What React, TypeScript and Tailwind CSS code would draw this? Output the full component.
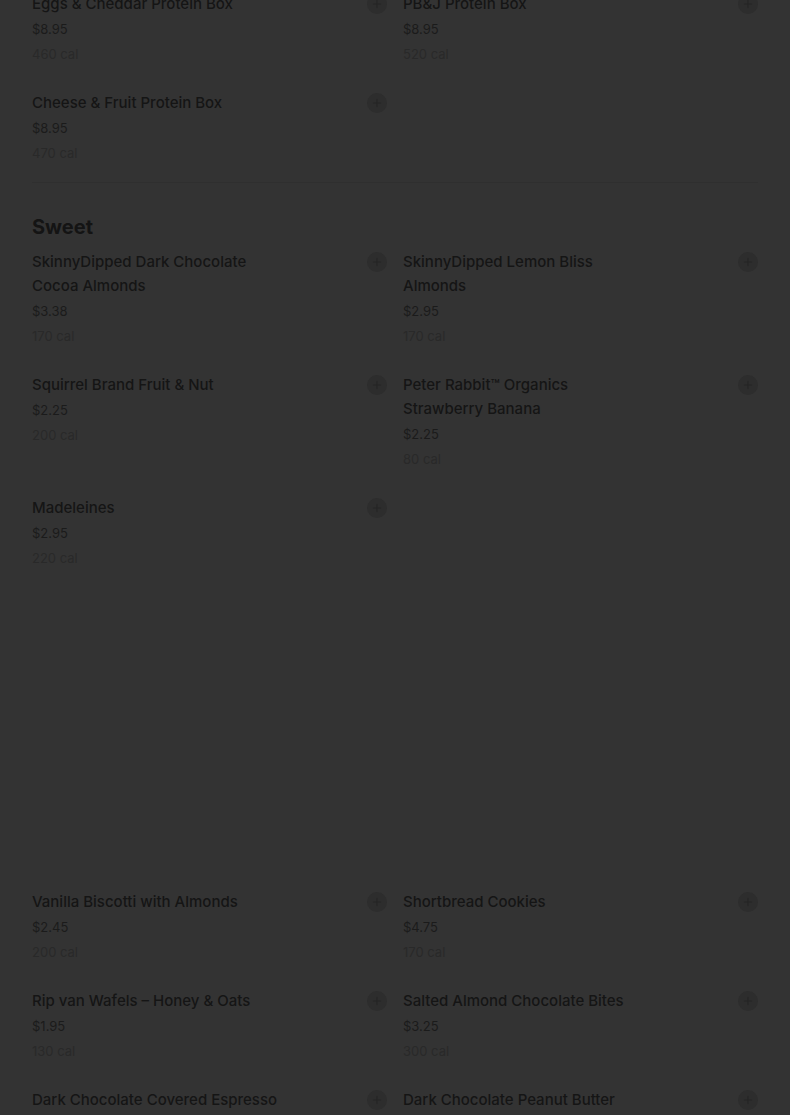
type Item = { name: string; price: string; cal: string } | null;

const PROTEIN_ROWS: Item[][] = [
  [
    { name: "Eggs & Cheddar Protein Box", price: "$8.95", cal: "460 cal" },
    { name: "PB&J Protein Box", price: "$8.95", cal: "520 cal" },
  ],
  [{ name: "Cheese & Fruit Protein Box", price: "$8.95", cal: "470 cal" }, null],
];

const SWEET_TOP: Item[][] = [
  [
    { name: "SkinnyDipped Dark Chocolate Cocoa Almonds", price: "$3.38", cal: "170 cal" },
    { name: "SkinnyDipped Lemon Bliss Almonds", price: "$2.95", cal: "170 cal" },
  ],
  [
    { name: "Squirrel Brand Fruit & Nut", price: "$2.25", cal: "200 cal" },
    { name: "Peter Rabbit™ Organics Strawberry Banana", price: "$2.25", cal: "80 cal" },
  ],
  [{ name: "Madeleines", price: "$2.95", cal: "220 cal" }, null],
];

const SWEET_BOTTOM: Item[][] = [
  [
    { name: "Vanilla Biscotti with Almonds", price: "$2.45", cal: "200 cal" },
    { name: "Shortbread Cookies", price: "$4.75", cal: "170 cal" },
  ],
  [
    { name: "Rip van Wafels – Honey & Oats", price: "$1.95", cal: "130 cal" },
    { name: "Salted Almond Chocolate Bites", price: "$3.25", cal: "300 cal" },
  ],
  [
    { name: "Dark Chocolate Covered Espresso Beans", price: "$2.95", cal: "210 cal" },
    { name: "Dark Chocolate Peanut Butter Cups", price: "$3.25", cal: "240 cal" },
  ],
];

function AddButton() {
  return (
    <span className="mt-[2px] inline-flex size-5 shrink-0 items-center justify-center rounded-full bg-[#2d2d2d]">
      <svg viewBox="0 0 20 20" className="size-3" fill="none" stroke="#252525" strokeWidth="2" strokeLinecap="round" aria-hidden>
        <path d="M10 4v12M4 10h12" />
      </svg>
    </span>
  );
}

function MenuItem({ item }: { item: Item }) {
  if (!item) return <div />;
  return (
    <div className="flex items-start justify-between">
      <div className="max-w-[246px]">
        <p className="text-[15px] font-medium leading-6 text-[#151515]">{item.name}</p>
        <p className="mt-[3px] text-[13px] leading-5 text-[#1b1b1b]">{item.price}</p>
        <p className="mt-[5px] text-[13px] leading-5 text-[#292929]">{item.cal}</p>
      </div>
      <AddButton />
    </div>
  );
}

function Rows({ rows }: { rows: Item[][] }) {
  return (
    <>
      {rows.map((row, ri) =>
        row.map((item, ci) => <MenuItem key={`${ri}-${ci}`} item={item} />)
      )}
    </>
  );
}

export default function App() {
  return (
    <div className="h-[1115px] overflow-hidden bg-[#333333] px-8" style={{ fontFamily: "Inter, 'Noto Sans', sans-serif" }}>
      {/* previous section, scrolled partly off the top */}
      <div className="-mt-[8px] grid grid-cols-2 gap-x-4 gap-y-[27px]">
        <Rows rows={PROTEIN_ROWS} />
      </div>

      <div className="mt-[19px] border-t border-[#2f2f2f] pt-[30px]">
        <h2 className="mb-[9px] text-[20px] font-bold leading-7 text-[#141414]">Sweet</h2>
        <div className="grid grid-cols-2 gap-x-4 gap-y-[27px]">
          <Rows rows={SWEET_TOP} />
          <div className="col-span-2 h-[268px]" />
          <Rows rows={SWEET_BOTTOM} />
        </div>
      </div>
    </div>
  );
}
